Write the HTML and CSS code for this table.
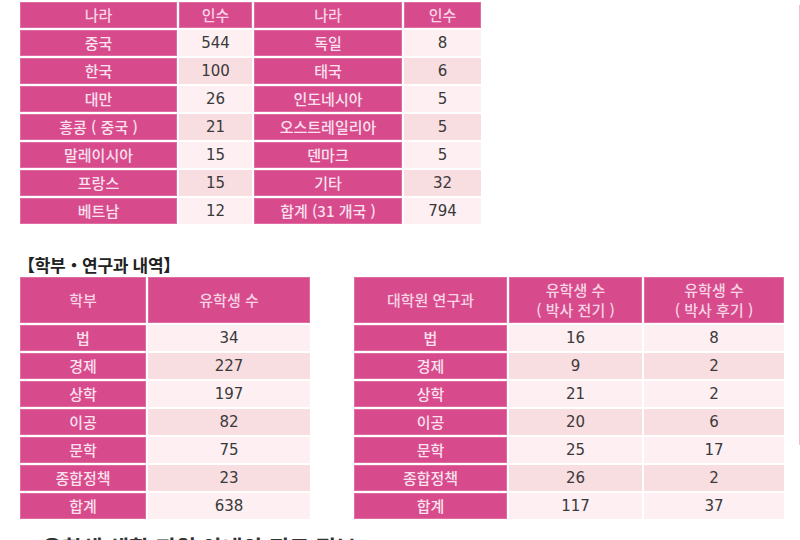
FILE: index.html
```html
<!DOCTYPE html>
<html lang="ko">
<head>
<meta charset="utf-8">
<title>유학생 현황</title>
<link rel="stylesheet" href="styles.css">
</head>
<body>
<div class="page">
  <main class="content">
    <div class="grid top">
      <div class="cell h">나라</div><div class="cell h">인수</div><div class="cell h">나라</div><div class="cell h">인수</div>
      <div class="cell l">중국</div><div class="cell v a">544</div><div class="cell l">독일</div><div class="cell v a">8</div>
      <div class="cell l">한국</div><div class="cell v b">100</div><div class="cell l">태국</div><div class="cell v b">6</div>
      <div class="cell l">대만</div><div class="cell v a">26</div><div class="cell l">인도네시아</div><div class="cell v a">5</div>
      <div class="cell l">홍콩 ( 중국 )</div><div class="cell v b">21</div><div class="cell l">오스트레일리아</div><div class="cell v b">5</div>
      <div class="cell l">말레이시아</div><div class="cell v a">15</div><div class="cell l">덴마크</div><div class="cell v a">5</div>
      <div class="cell l">프랑스</div><div class="cell v b">15</div><div class="cell l">기타</div><div class="cell v b">32</div>
      <div class="cell l">베트남</div><div class="cell v a">12</div><div class="cell l">합계 (31 개국 )</div><div class="cell v a">794</div>
    </div>

    <h2 class="section-title">【학부・연구과 내역】</h2>

    <div class="bottom">
      <div class="grid ug">
        <div class="cell h">학부</div><div class="cell h">유학생 수</div>
        <div class="cell l">법</div><div class="cell v a">34</div>
        <div class="cell l">경제</div><div class="cell v b">227</div>
        <div class="cell l">상학</div><div class="cell v a">197</div>
        <div class="cell l">이공</div><div class="cell v b">82</div>
        <div class="cell l">문학</div><div class="cell v a">75</div>
        <div class="cell l">종합정책</div><div class="cell v b">23</div>
        <div class="cell l">합계</div><div class="cell v a">638</div>
      </div>
      <div class="grid grad">
        <div class="cell h">대학원 연구과</div>
        <div class="cell h two"><span class="ln">유학생 수</span><span class="ln">( 박사 전기 )</span></div>
        <div class="cell h two"><span class="ln">유학생 수</span><span class="ln">( 박사 후기 )</span></div>
        <div class="cell l">법</div><div class="cell v a">16</div><div class="cell v a">8</div>
        <div class="cell l">경제</div><div class="cell v b">9</div><div class="cell v b">2</div>
        <div class="cell l">상학</div><div class="cell v a">21</div><div class="cell v a">2</div>
        <div class="cell l">이공</div><div class="cell v b">20</div><div class="cell v b">6</div>
        <div class="cell l">문학</div><div class="cell v a">25</div><div class="cell v a">17</div>
        <div class="cell l">종합정책</div><div class="cell v b">26</div><div class="cell v b">2</div>
        <div class="cell l">합계</div><div class="cell v a">117</div><div class="cell v a">37</div>
      </div>
    </div>

    <h2 class="next">유학생 생활 지원 안내와 진로 정보</h2>
  </main>
  <div class="edge"></div>
</div>
</body>
</html>
```

FILE: styles.css
```css
* { box-sizing: border-box; }

html, body {
  margin: 0;
  padding: 0;
  background: #ffffff;
}

body {
  font-family: "Noto Sans CJK KR", "Noto Sans", sans-serif;
  color: #333333;
}

.page {
  display: flex;
  width: 800px;
  height: 540px;
  overflow: hidden;
}

.content {
  flex: 1;
  padding: 2px 0 0 20px;
  min-width: 0;
}

.edge {
  width: 1px;
  height: 440px;
  margin-top: 5px;
  background: #f0bcd6;
}

.grid {
  display: grid;
  gap: 2px;
}

.top {
  grid-template-columns: 157px 73px 148px 77px;
  grid-auto-rows: 26px;
}

.cell {
  display: flex;
  align-items: center;
  justify-content: center;
  text-align: center;
  white-space: nowrap;
}

.h, .l {
  background: #d74b8c;
  box-shadow: inset 0 0 0 1px #df6ca2;
  color: #fbe1ee;
  font-size: 15px;
  line-height: 18px;
  font-weight: 500;
}

.h {
  color: #f8d3e5;
}

.two {
  flex-direction: column;
  font-size: 15px;
}

.ln {
  display: block;
  line-height: 20px;
}

.v {
  font-family: "DejaVu Sans", sans-serif;
  font-size: 15px;
  color: #3a3a3a;
}

.a { background: #fdeff2; }
.b { background: #f8dde1; }

.section-title {
  margin: 30px 0 0 -2px;
  font-size: 17px;
  line-height: 21px;
  font-weight: 700;
  color: #222222;
  letter-spacing: -0.3px;
}

.bottom {
  display: flex;
  align-items: flex-start;
  gap: 44px;
  margin-top: 2px;
}

.ug {
  grid-template-columns: 126px 162px;
  grid-template-rows: 46px;
  grid-auto-rows: 26px;
}

.grad {
  grid-template-columns: 153px 133px 140px;
  grid-template-rows: 46px;
  grid-auto-rows: 26px;
}

.next {
  margin: 14px 0 0 22px;
  font-size: 22px;
  line-height: 26px;
  font-weight: 700;
  color: #333333;
  white-space: nowrap;
}
```
